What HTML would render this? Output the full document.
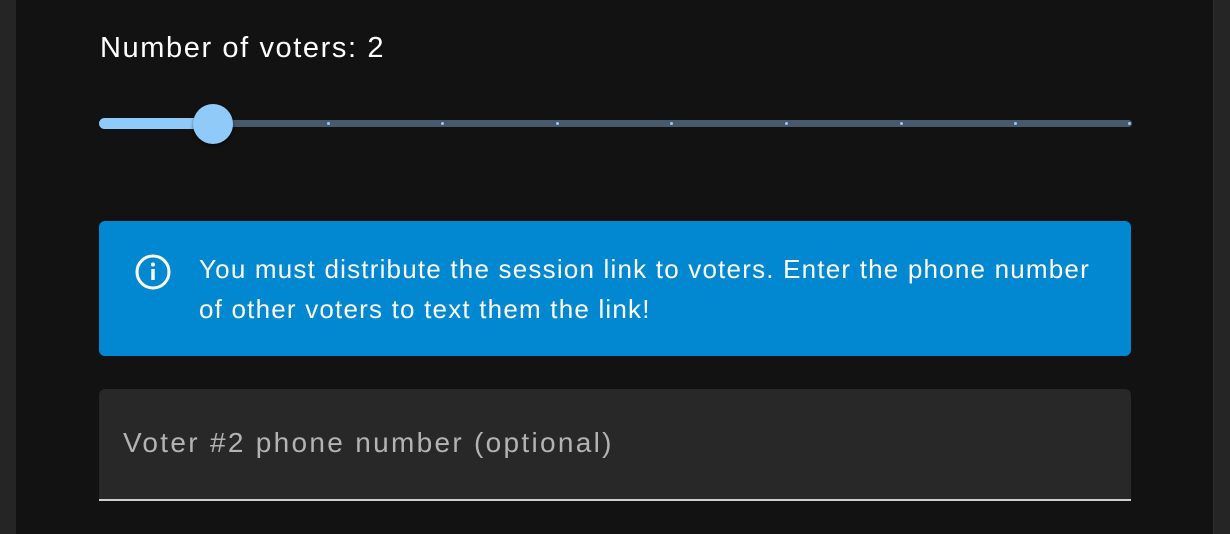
<!DOCTYPE html>
<html><head><style>
body{margin:0;width:1230px;height:534px;background:#121212;position:relative;overflow:hidden;font-family:"Liberation Sans",sans-serif}
.l{position:absolute;left:0;top:0;width:16px;height:534px;background:#252525}
.r{position:absolute;left:1213px;top:0;width:17px;height:534px;background:#252525;border-left:1px solid #2e2e2e}
.t{position:absolute;left:100px;top:32px;color:#fff;font-size:29px;letter-spacing:1.6px}
.tr{position:absolute;left:100px;top:120px;width:1032px;height:7px;background:#475a6c;border-radius:4px}
.ac{position:absolute;left:99px;top:118px;width:114px;height:11px;background:#90caf9;border-radius:6px}
.th{position:absolute;left:193px;top:104px;width:40px;height:40px;border-radius:50%;background:#90caf9;box-shadow:0 2px 3px rgba(0,0,0,.5)}
.d{position:absolute;top:122px;width:3px;height:3px;border-radius:50%;background:#90caf9}
.al{position:absolute;left:99px;top:221px;width:1032px;height:135px;background:#0288d1;border-radius:6px}
.al p{position:absolute;left:100px;top:28px;margin:0;color:#fff;font-size:26px;letter-spacing:1.2px;line-height:40px;width:905px}
.in{position:absolute;left:99px;top:389px;width:1032px;height:110px;background:#282828;border-radius:6px 6px 0 0;border-bottom:2px solid #cfcfcf}
.in span{position:absolute;left:24px;top:38px;color:#b3b3b3;font-size:28px;letter-spacing:2.3px}
</style></head><body>
<div class="l"></div><div class="r"></div>
<div class="t">Number of voters: 2</div>
<div class="tr"></div>
<div class="d" style="left:327px"></div><div class="d" style="left:441px"></div><div class="d" style="left:556px"></div><div class="d" style="left:670px"></div><div class="d" style="left:785px"></div><div class="d" style="left:900px"></div><div class="d" style="left:1014px"></div><div class="d" style="left:1128px"></div>
<div class="ac"></div><div class="th"></div>
<div class="al">
<svg style="position:absolute;left:35px;top:32px" width="38" height="38" viewBox="0 0 38 38"><circle cx="19" cy="19" r="16" fill="none" stroke="#fff" stroke-width="3"/><rect x="17.3" y="16" width="3.4" height="11" fill="#fff"/><circle cx="19" cy="11.5" r="2" fill="#fff"/></svg>
<p>You must distribute the session link to voters. Enter the phone number of other voters to text them the link!</p>
</div>
<div class="in"><span>Voter #2 phone number (optional)</span></div>
</body></html>
